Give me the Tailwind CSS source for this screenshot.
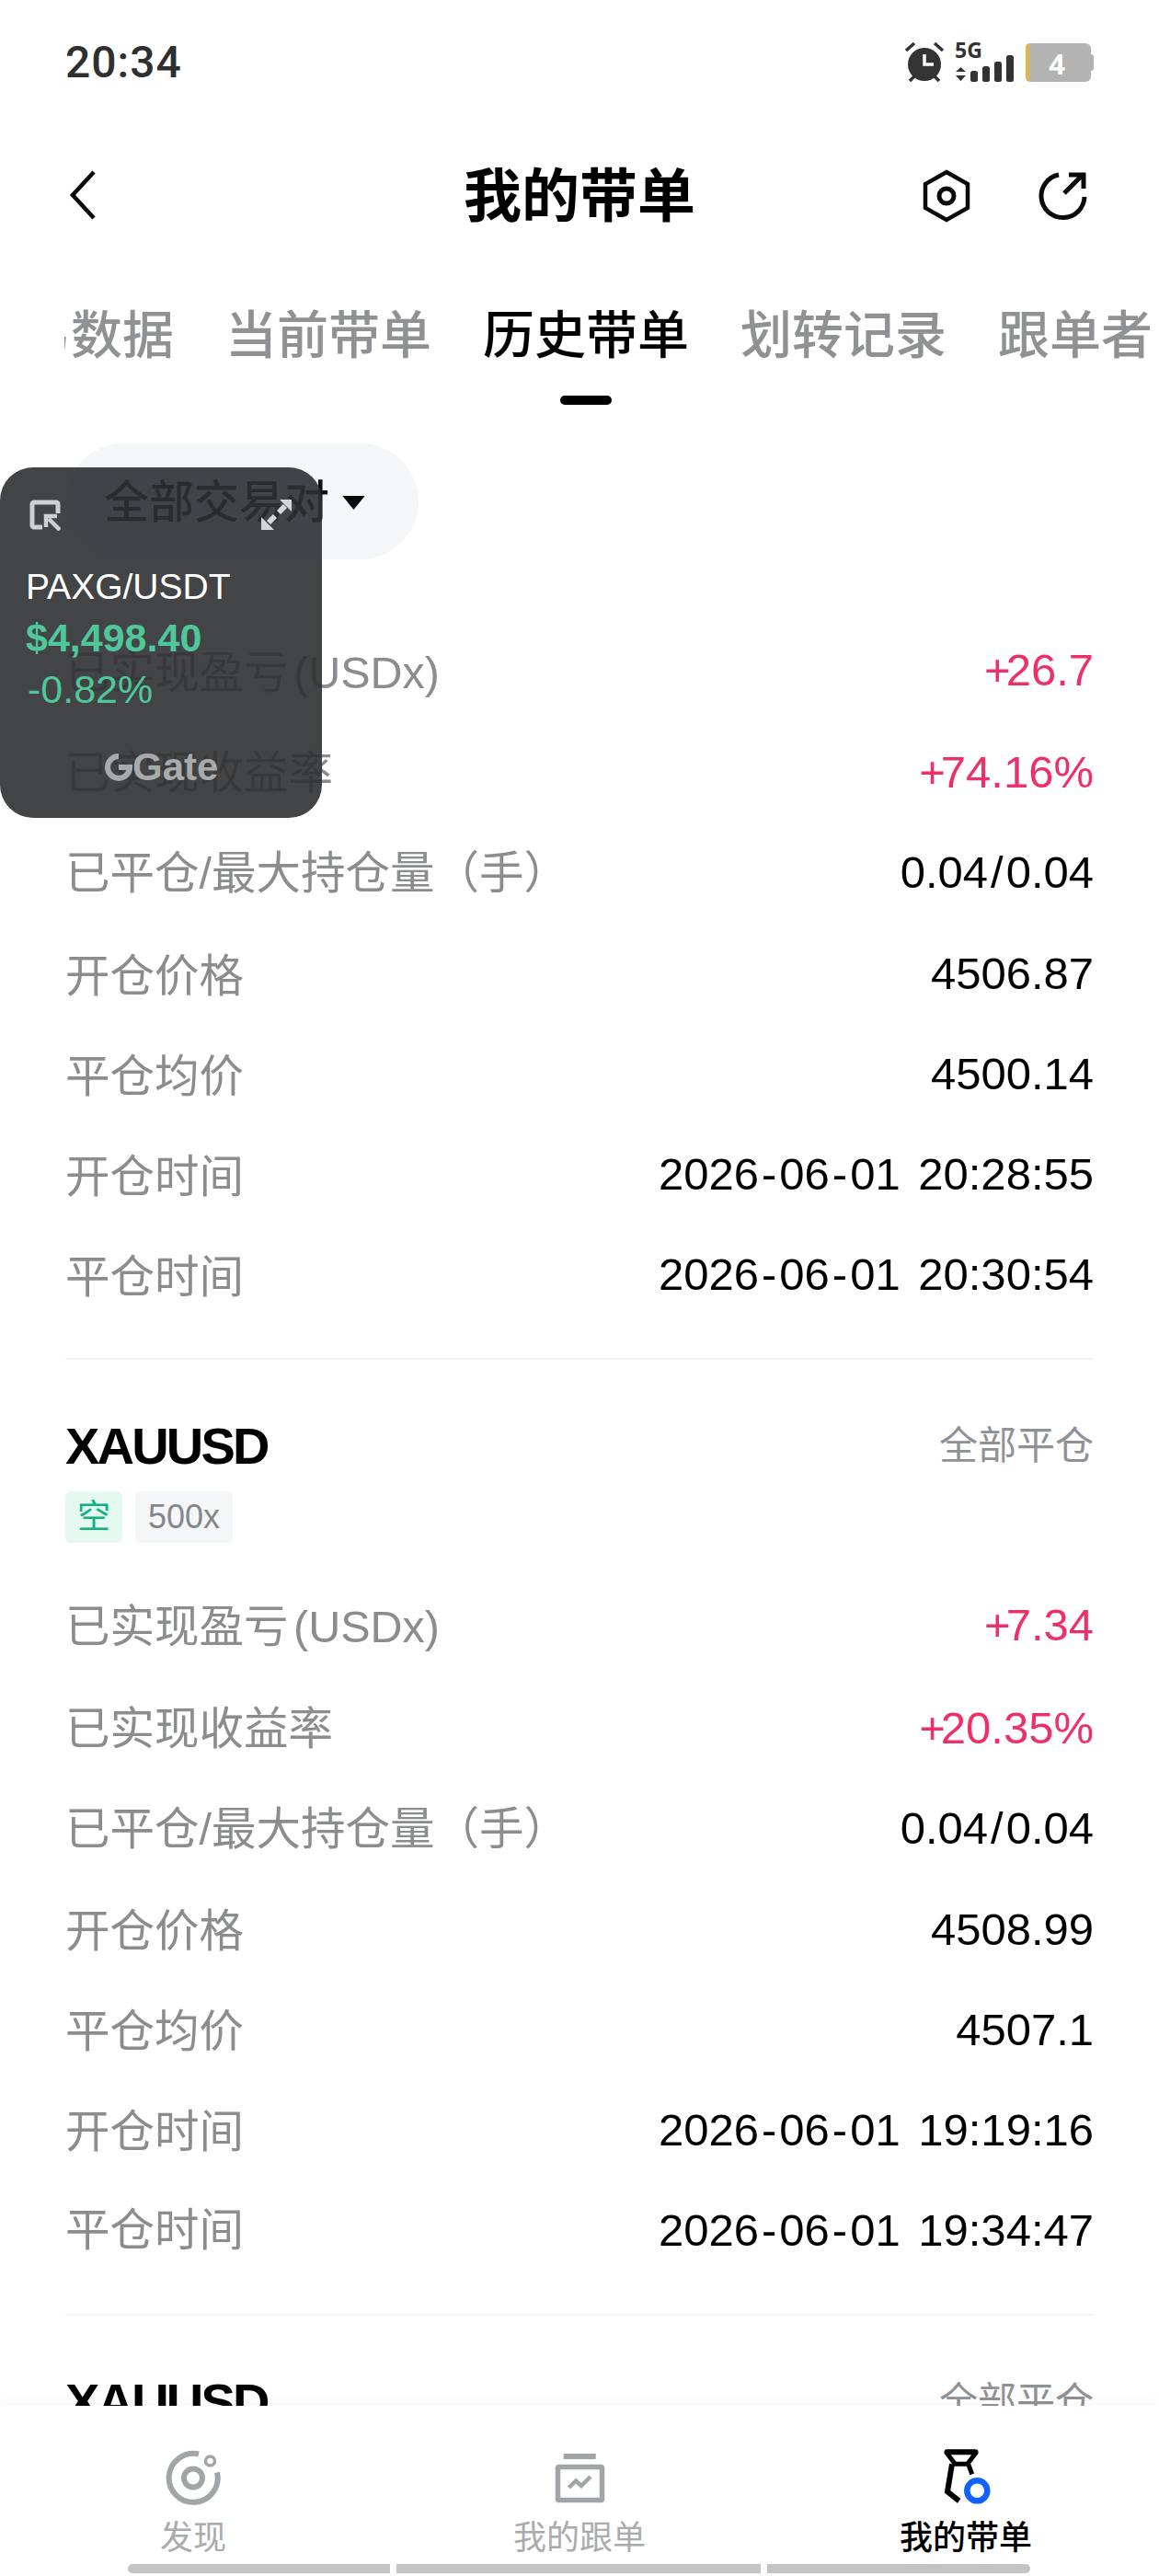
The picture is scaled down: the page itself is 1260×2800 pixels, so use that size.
<!doctype html>
<html lang="zh">
<head>
<meta charset="utf-8">
<script src="https://cdn.jsdelivr.net/npm/@tailwindcss/browser@4"></script>
</head>
<body class="bg-white">
<div class="relative w-[1260px] h-[2800px] overflow-hidden bg-white text-black font-['Liberation_Sans','Noto_Sans_CJK_SC',sans-serif]">

  <!-- status bar -->
  <div class="h-[136px] px-[71px] flex items-center justify-between">
    <span class="text-[48px] font-medium tracking-[1px] text-[#2f2f2f] font-['Roboto','Noto_Sans_CJK_SC',sans-serif]">20:34</span>
    <svg width="207" height="44" viewBox="983 45 207 44" class="block">
      <circle cx="1006" cy="69" r="18" fill="#333"/>
      <path d="M1006 58v11h10" fill="none" stroke="#fff" stroke-width="3.5"/>
      <path d="M986 54l9-8M1026 54l-9-8M990 87l5-5M1022 87l-5-5" stroke="#333" stroke-width="3.5" fill="none"/>
      <text x="1039" y="62" font-family="Noto Sans" font-weight="700" font-size="23" fill="#333">5G</text>
      <path d="M1040 77l5.500-5 5.500 5zM1040 81l5.500 6 5.500-6z" fill="#333"/>
      <rect x="1056" y="76" width="8" height="12" rx="2.500" fill="#333"/>
      <rect x="1069" y="71" width="8" height="17" rx="2.500" fill="#333"/>
      <rect x="1082" y="66" width="8" height="22" rx="2.500" fill="#333"/>
      <rect x="1095" y="59" width="8" height="29" rx="2.500" fill="#333"/>
      <rect x="1116" y="46" width="71" height="42" rx="6" fill="#b3b3b3"/>
      <path d="M1120 46h0a5 5 0 0 0-4 5v32a5 5 0 0 0 4 5z" fill="#e3b541"/>
      <rect x="1183" y="58" width="7" height="18" rx="3" fill="#b3b3b3"/>
      <text x="1150" y="80" text-anchor="middle" font-family="Noto Sans" font-weight="700" font-size="31" fill="#fff">4</text>
    </svg>
  </div>

  <!-- header -->
  <div class="relative h-[154px] px-[71px] flex items-center justify-between">
    <svg width="30" height="54" viewBox="0 0 30 54" class="block -mt-[2px] ml-[4px]"><path d="M27 2L4 27l23 25" fill="none" stroke="#0a0a0a" stroke-width="4.500"/></svg>
    <span class="absolute left-0 right-0 text-center text-[63px] font-bold leading-none">我的带单</span>
    <div class="flex items-center gap-[74px] pr-[6px]">
      <svg width="52" height="58" viewBox="0 0 52 58"><path d="M26 3l23 13v26L26 55 3 42V16z" fill="none" stroke="#0a0a0a" stroke-width="4.500"/><circle cx="26" cy="29" r="8" fill="none" stroke="#0a0a0a" stroke-width="5"/></svg>
      <svg width="54" height="56" viewBox="0 0 54 56"><path d="M22 5A23.500 23.500 0 1 0 50 29" fill="none" stroke="#0a0a0a" stroke-width="5"/><path d="M28 25L47 6M33 5h16v15" fill="none" stroke="#0a0a0a" stroke-width="5"/></svg>
    </div>
  </div>

  <!-- tabs -->
  <div class="ml-[70px] mr-[10px] h-[150px] overflow-hidden">
    <div class="flex -ml-[105px] gap-[56px] items-center h-[150px] text-[56px] font-medium text-[#8f9194] whitespace-nowrap leading-none">
      <span>交易数据</span>
      <span>当前带单</span>
      <span class="relative text-black">历史带单
        <i class="absolute left-[84px] top-[93px] w-[56px] h-[10px] rounded-full bg-black"></i>
      </span>
      <span>划转记录</span>
      <span>跟单者</span>
    </div>
  </div>

  <div class="px-[71px]">
    <!-- filter -->
    <div class="mt-[42px] w-[384px] h-[126px] rounded-full bg-[#f5f6f7] flex items-center pl-[42px] gap-[14px] text-[49px] font-medium text-[#111] leading-none">
      <span class="pt-[2px]">全部交易对</span>
      <svg class="mt-[2px]" width="25" height="15" viewBox="0 0 26 16"><path d="M0 0h26L13 16z" fill="#0a0a0a"/></svg>
    </div>

    <!-- section 1 -->
    <div class="mt-[66px] text-[49px] leading-none [word-spacing:6px]">
      <div class="h-[110px] flex items-center justify-between"><span class="pt-[4px] text-[48.5px] text-[#8a8c8f] [word-spacing:-8px]">已实现盈亏 (USDx)</span><span class="text-[#ee3068] -mt-[2px]"><span class="-mr-[5px]">+</span>26.7</span></div>
      <div class="h-[110px] flex items-center justify-between"><span class="pt-[2px] text-[48.5px] text-[#8a8c8f]">已实现收益率</span><span class="text-[#ee3068]"><span class="-mr-[5px]">+</span>74.16%</span></div>
      <div class="h-[109px] flex items-center justify-between"><span class="pt-[2px] text-[48.5px] text-[#8a8c8f]">已平仓/最大持仓量（手）</span><span>0.04<span class="mx-[3px]">/</span>0.04</span></div>
      <div class="h-[110px] flex items-center justify-between"><span class="pt-[6px] text-[48.5px] text-[#8a8c8f]">开仓价格</span><span>4506.87</span></div>
      <div class="h-[109px] flex items-center justify-between"><span class="pt-[6px] text-[48.5px] text-[#8a8c8f]">平仓均价</span><span>4500.14</span></div>
      <div class="h-[109px] flex items-center justify-between"><span class="pt-[6px] text-[48.5px] text-[#8a8c8f]">开仓时间</span><span>2026<span class="mx-[3px]">-</span>06<span class="mx-[3px]">-</span>01 20:28:55</span></div>
      <div class="h-[109px] flex items-center justify-between"><span class="pt-[6px] text-[48.5px] text-[#8a8c8f]">平仓时间</span><span>2026<span class="mx-[3px]">-</span>06<span class="mx-[3px]">-</span>01 20:30:54</span></div>
    </div>
    <div class="mt-[36px] h-[2px] bg-[#f3f4f5]"></div>

    <!-- section 2 -->
    <div class="mt-[70px] flex items-center justify-between h-[48px]">
      <span class="text-[56px] font-bold leading-none tracking-[-2.8px]">XAUUSD</span>
      <span class="text-[42px] text-[#8f9194] leading-none">全部平仓</span>
    </div>
    <div class="mt-[25px] flex gap-[14px] text-[36px] leading-none">
      <span class="w-[62px] h-[56px] rounded-[6px] bg-[#e6f9f1] text-[#10b37f] flex items-center justify-center">空</span>
      <span class="w-[106px] h-[56px] rounded-[6px] bg-[#f5f6f7] text-[#85878a] flex items-center justify-center">500x</span>
    </div>
    <div class="mt-[36px] text-[49px] leading-none [word-spacing:6px]">
      <div class="h-[110px] flex items-center justify-between"><span class="text-[48.5px] text-[#8a8c8f] [word-spacing:-8px]">已实现盈亏 (USDx)</span><span class="text-[#ee3068] -mt-[3px]"><span class="-mr-[5px]">+</span>7.34</span></div>
      <div class="h-[110px] flex items-center justify-between"><span class="pt-[2px] text-[48.5px] text-[#8a8c8f]">已实现收益率</span><span class="text-[#ee3068]"><span class="-mr-[5px]">+</span>20.35%</span></div>
      <div class="h-[109px] flex items-center justify-between"><span class="pt-[2px] text-[48.5px] text-[#8a8c8f]">已平仓/最大持仓量（手）</span><span>0.04<span class="mx-[3px]">/</span>0.04</span></div>
      <div class="h-[110px] flex items-center justify-between"><span class="pt-[4px] text-[48.5px] text-[#8a8c8f]">开仓价格</span><span>4508.99</span></div>
      <div class="h-[109px] flex items-center justify-between"><span class="pt-[3px] text-[48.5px] text-[#8a8c8f]">平仓均价</span><span>4507.1</span></div>
      <div class="h-[109px] flex items-center justify-between"><span class="pt-[3px] text-[48.5px] text-[#8a8c8f]">开仓时间</span><span>2026<span class="mx-[3px]">-</span>06<span class="mx-[3px]">-</span>01 19:19:16</span></div>
      <div class="h-[109px] flex items-center justify-between"><span class="text-[48.5px] text-[#8a8c8f]">平仓时间</span><span>2026<span class="mx-[3px]">-</span>06<span class="mx-[3px]">-</span>01 19:34:47</span></div>
    </div>
    <div class="mt-[36px] h-[2px] bg-[#f3f4f5]"></div>

    <!-- section 3 clipped -->
    <div class="mt-[70px] flex items-center justify-between h-[48px]">
      <span class="text-[56px] font-bold leading-none tracking-[-2.8px]">XAUUSD</span>
      <span class="text-[42px] text-[#8f9194] leading-none">全部平仓</span>
    </div>
  </div>

  <!-- floating widget -->
  <div class="absolute left-0 top-[508px] w-[350px] h-[381px] rounded-[36px] bg-[#2e3032]/90">
    <svg class="absolute left-[32px] top-[35px]" width="34" height="34" viewBox="0 0 34 34"><path d="M14 30H5a2 2 0 0 1-2-2V5a2 2 0 0 1 2-2h24a2 2 0 0 1 2 2v10" fill="none" stroke="#cfd0d1" stroke-width="5"/><path d="M33 33L21 21M18 30V18h12" fill="none" stroke="#cfd0d1" stroke-width="4.500"/></svg>
    <svg class="absolute left-[284px] top-[35px]" width="34" height="33" viewBox="0 0 34 33"><path d="M20 0h13v13z" fill="#d5d6d7"/><path d="M0 19l14 14H0z" fill="#d5d6d7"/><path d="M26 7l-7 7M15 18l-7 7" stroke="#d5d6d7" stroke-width="6"/></svg>
    <div class="absolute left-[28px] top-[108px] text-[39px] leading-[44px] text-white">PAXG/USDT</div>
    <div class="absolute left-[28px] top-[162px] text-[43px] leading-[46px] font-bold text-[#4fc79b]">$4,498.40</div>
    <div class="absolute left-[30px] top-[218px] text-[43px] leading-[46px] text-[#4fc79b]">-0.82%</div>
    <div class="absolute left-[114px] top-[305px] flex items-center text-[#a9aaab]">
      <svg width="30" height="30" viewBox="0 0 30 30"><path d="M15 3A12 12 0 1 0 27 15H15" fill="none" stroke="#a9aaab" stroke-width="6"/></svg>
      <span class="text-[42px] font-bold leading-none">Gate</span>
    </div>
  </div>

  <!-- bottom nav -->
  <div class="absolute left-0 right-0 bottom-0 h-[185px] bg-white shadow-[0_-8px_16px_rgba(0,0,0,0.025)]">
    <div class="grid grid-cols-3 w-[1260px] absolute left-0 top-[47px]">
      <div class="flex flex-col items-center w-[420px]">
        <svg width="62" height="62" viewBox="0 0 62 62"><path d="M37 5.500A26.500 26.500 0 1 0 57 25.500" fill="none" stroke="#a2a5a7" stroke-width="6"/><circle cx="31" cy="31.500" r="10" fill="none" stroke="#a2a5a7" stroke-width="6"/><circle cx="49.500" cy="13" r="5" fill="none" stroke="#a2a5a7" stroke-width="3.500"/></svg>
        <span class="mt-[17px] text-[36px] leading-none text-[#a9abad]">发现</span>
      </div>
      <div class="flex flex-col items-center w-[420px]">
        <svg width="62" height="62" viewBox="0 0 62 62"><rect x="13.700" y="5" width="35" height="6" fill="#a2a5a7"/><rect x="7.500" y="19.500" width="48" height="36" rx="1" fill="none" stroke="#a2a5a7" stroke-width="5.500"/><path d="M19.500 42l7.500-7.500 6 5.500 10-10" fill="none" stroke="#a2a5a7" stroke-width="4.500"/></svg>
        <span class="mt-[17px] text-[36px] leading-none text-[#a9abad]">我的跟单</span>
      </div>
      <div class="flex flex-col items-center w-[420px]">
        <svg width="62" height="62" viewBox="0 0 62 62"><path d="M10.500 3.300h31" fill="none" stroke="#000" stroke-width="6" stroke-linecap="round"/><path d="M9.300 3l10 13.300h13.400l10-13.300" fill="none" stroke="#000" stroke-width="5"/><path d="M16 16.300L11 46.300l12.700 10" fill="none" stroke="#000" stroke-width="6"/><path d="M33.700 16.300l4 11" fill="none" stroke="#000" stroke-width="5"/><circle cx="43.300" cy="45.300" r="11" fill="#fff" stroke="#0f62fe" stroke-width="6.500"/></svg>
        <span class="mt-[17px] text-[36px] leading-none text-black font-medium">我的带单</span>
      </div>
    </div>
    <div class="absolute left-[139px] top-[172px] flex gap-[7px]">
      <i class="block w-[285px] h-[10px] rounded-l-full bg-[#c4c4c4]"></i>
      <i class="block w-[396px] h-[10px] bg-[#c4c4c4]"></i>
      <i class="block w-[286px] h-[10px] rounded-r-full bg-[#c4c4c4]"></i>
    </div>
  </div>
</div>
</body>
</html>
